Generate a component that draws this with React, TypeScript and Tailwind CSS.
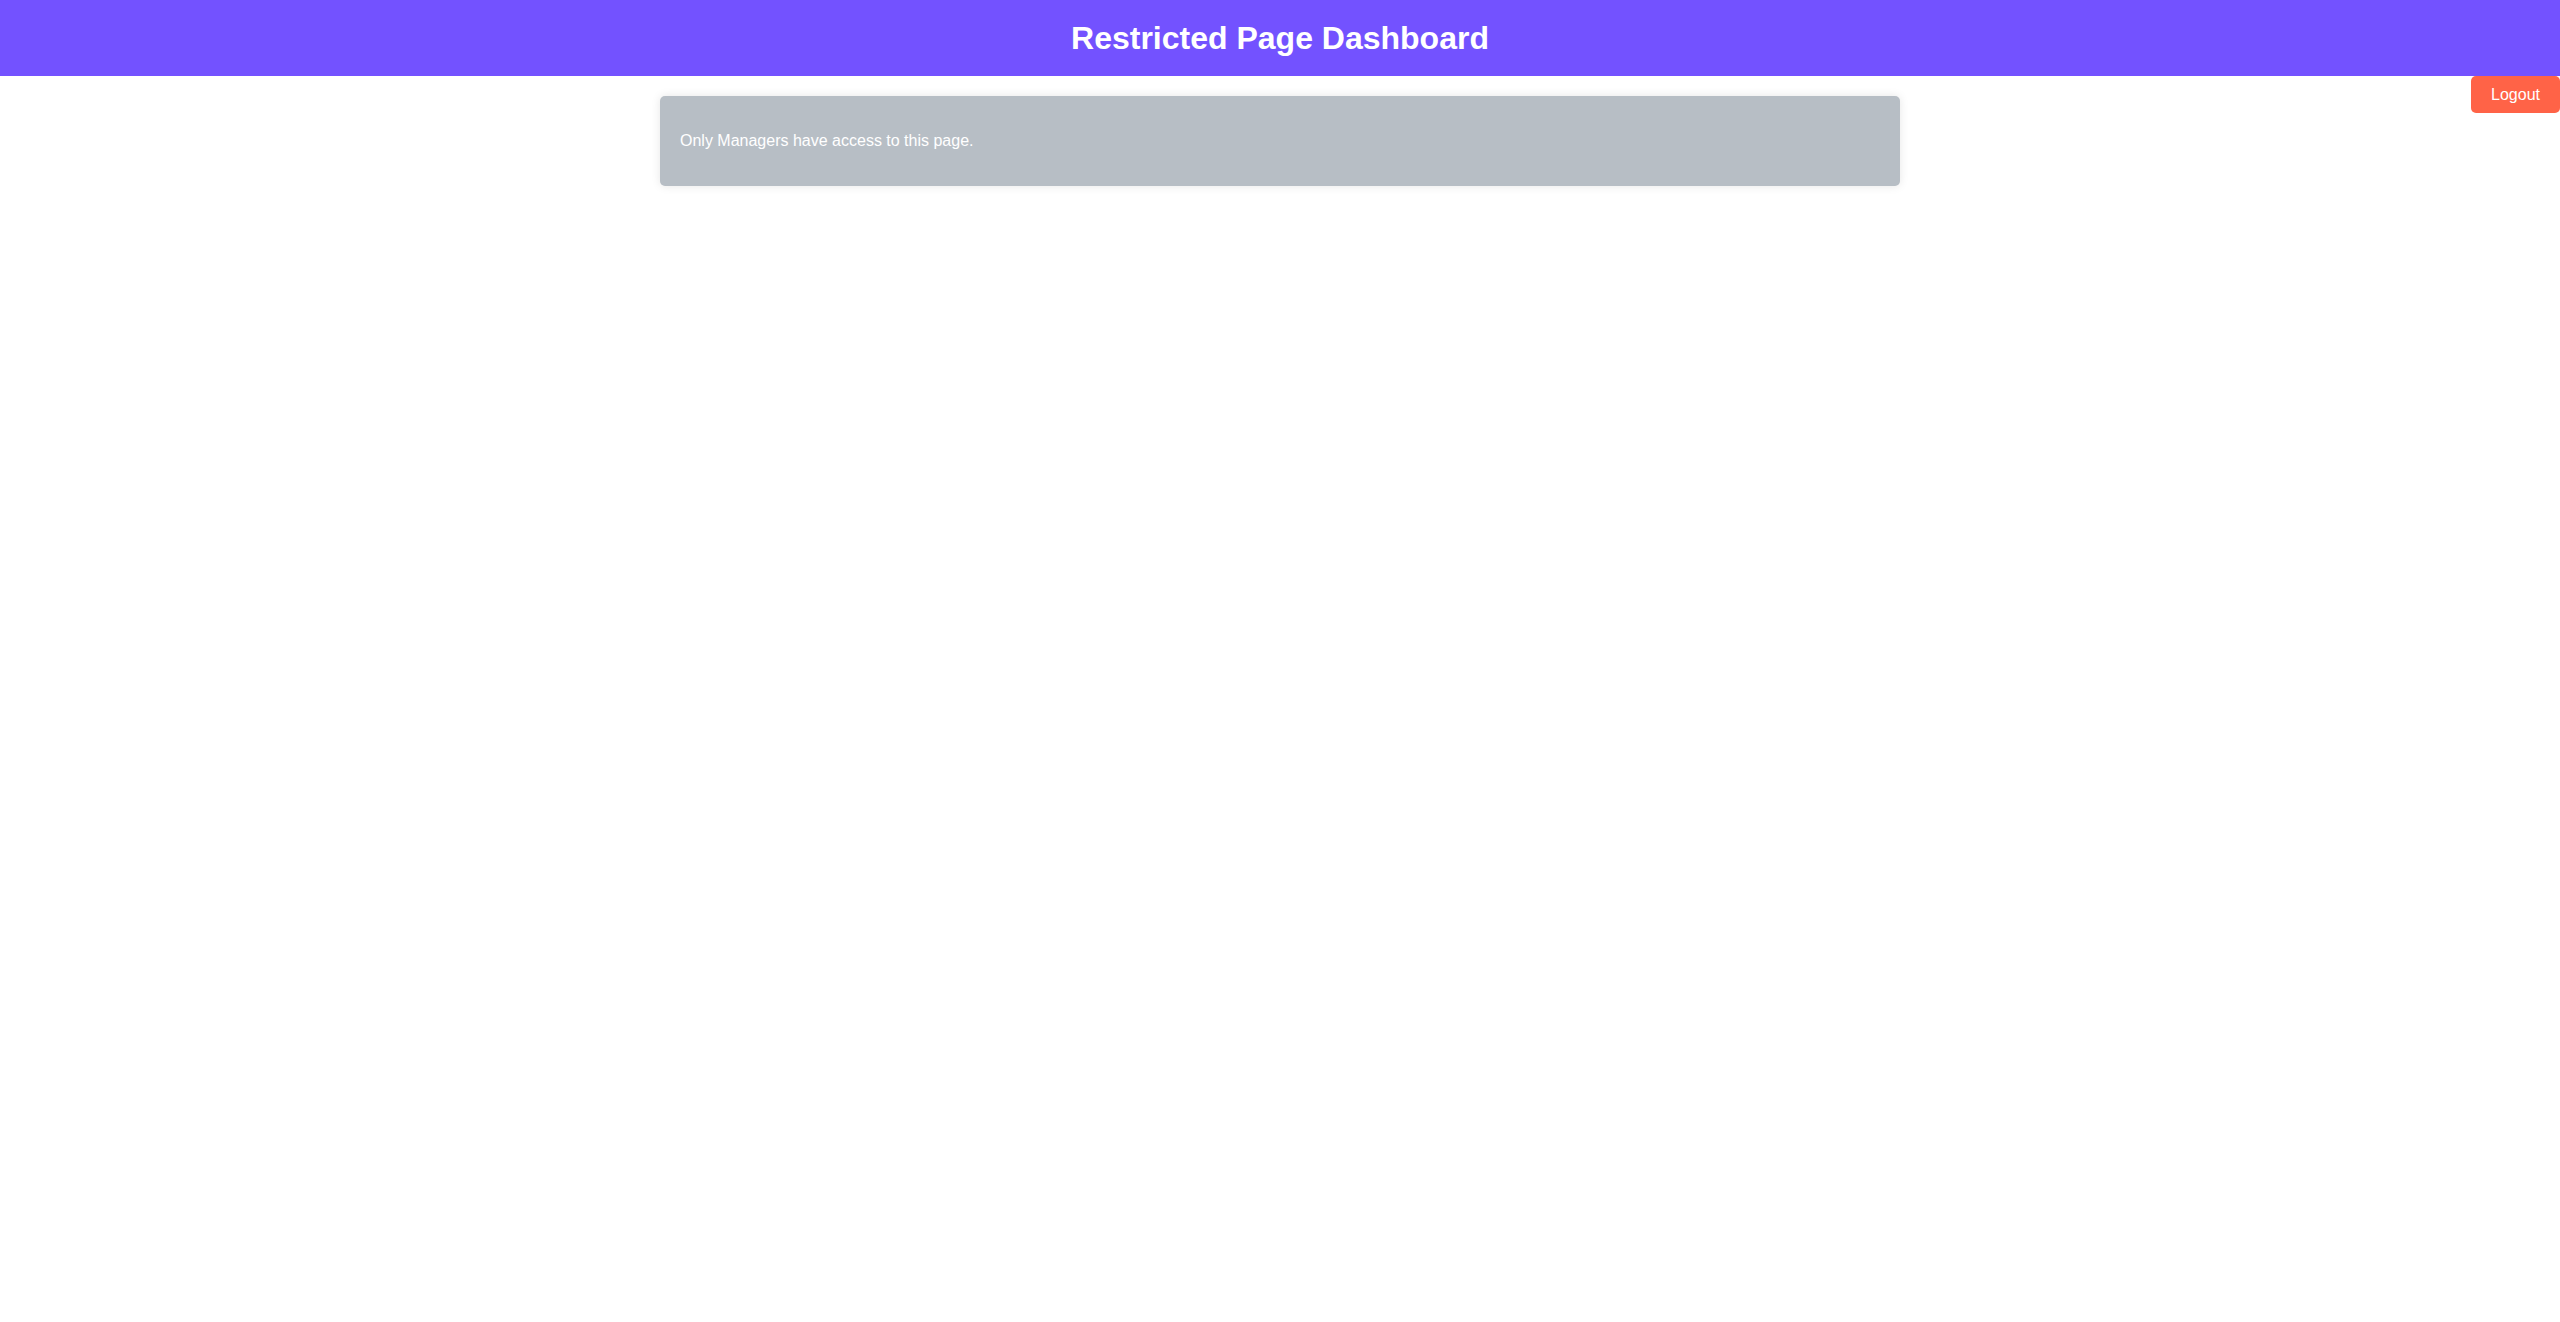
import React from "react";

export default function App() {
  return (
    <div className="relative min-h-[1322px] bg-white" style={{ fontFamily: '"Liberation Sans", Arial, sans-serif' }}>
      <header className="h-[76px] bg-[#7352ff] flex items-center justify-center">
        <h1 className="text-[32px] font-bold text-white leading-[37px]">Restricted Page Dashboard</h1>
      </header>
      <button className="absolute right-0 top-[76px] h-[37px] px-[20px] bg-[#ff6347] text-white text-[16px] rounded-[5px]">
        Logout
      </button>
      <div className="mx-auto mt-[20px] w-[1240px] rounded-[5px] bg-[#b7bec5] px-[20px] py-[20px] shadow-[0_0_10px_rgba(0,0,0,0.1)]">
        <p className="my-[16px] text-[16px] leading-[18px] text-white">Only Managers have access to this page.</p>
      </div>
    </div>
  );
}
